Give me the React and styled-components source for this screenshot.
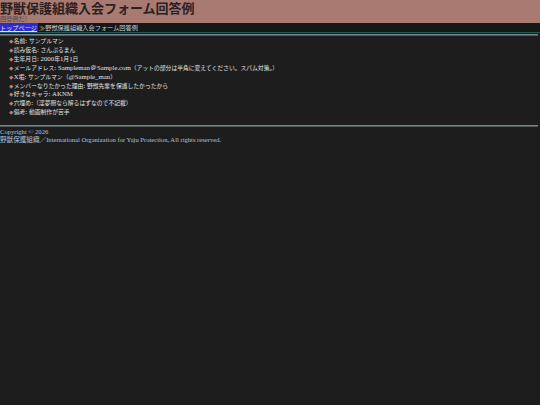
import React from "react";
import styled, { createGlobalStyle } from "styled-components";

const GlobalStyle = createGlobalStyle`
  html, body {
    margin: 0;
    padding: 0;
    background: #1d1d1d;
    font-family: "Liberation Serif", "Noto Sans CJK JP", serif;
  }
`;

const Page = styled.div`
  width: 540px;
  min-height: 405px;
  background: #1d1d1d;
  color: #d8d8d8;
`;

const Header = styled.header`
  background: #a97a72;
  height: 23px;
  display: flex;
  flex-direction: column;
`;

const Title = styled.h1`
  margin: 0;
  font-family: "Noto Sans CJK JP", sans-serif;
  font-size: 13px;
  font-weight: 700;
  line-height: 15px;
  height: 15px;
  color: #2a2222;
`;

const SubTitle = styled.div`
  font-family: "Noto Sans CJK JP", sans-serif;
  font-size: 6.2px;
  font-weight: 700;
  line-height: 7px;
  height: 7px;
  color: #6a5656;
`;

const Breadcrumb = styled.nav`
  background: #131919;
  height: 9px;
  font-family: "Noto Sans CJK JP", sans-serif;
  font-size: 6.2px;
  line-height: 9px;
  color: #c8d0d0;
  border-bottom: 1px solid #1f5a5a;
  white-space: nowrap;
`;

const TopLink = styled.a`
  background: #2b2bd0;
  color: #e4e4ff;
  text-decoration: underline;
  padding-right: 1px;
  margin-right: 1px;
`;

const Rule = styled.div`
  height: 0;
  margin: ${(p) => p.$margin || "1px 2px 0 0"};
  border-top: 1px solid #7c8686;
  border-bottom: 1px solid #4e5858;
`;

const List = styled.ul`
  list-style: none;
  margin: 1px 0 8px;
  padding: 0 0 0 9px;
`;

const Item = styled.li`
  font-family: "Noto Sans CJK JP", sans-serif;
  font-size: 5.8px;
  line-height: 7.9px;
  color: #e0e0e0;
  white-space: nowrap;

  &::before {
    content: "◆";
    color: #c27e6e;
    font-family: "DejaVu Sans", sans-serif;
    font-size: 5.5px;
    margin-right: 0.5px;
  }
`;

const Latin = styled.span`
  font-family: "Liberation Serif", serif;
  font-size: 6.8px;
`;

const Footer = styled.footer`
  font-size: 6.6px;
  line-height: 7.4px;
  color: #b4c2da;
  padding-top: 1px;
`;

const items = [
  "名前: サンプルマン",
  "読み仮名: さんぷるまん",
  "生年月日: 2000年1月1日",
  "メールアドレス: Sampleman＠Sample.com（アットの部分は半角に変えてください。スパム対策。）",
  "X垢: サンプルマン（@Sample_man）",
  "メンバーなりたかった理由: 野獣先輩を保護したかったから",
  "好きなキャラ: AKNM",
  "穴埋め:（淫夢厨なら解るはずなので不記載）",
  "備考: 動画制作が苦手",
];

// split ascii runs out so they get the serif latin size
const renderMixed = (text) =>
  text
    .split(/([\x20-\x7E＠]+)/)
    .filter(Boolean)
    .map((part, i) =>
      /^[\x20-\x7E＠]+$/.test(part) ? <Latin key={i}>{part}</Latin> : part
    );

export default function App() {
  return (
    <Page>
      <GlobalStyle />
      <Header>
        <Title>野獣保護組織入会フォーム回答例</Title>
        <SubTitle>回答例だ!</SubTitle>
      </Header>
      <Breadcrumb>
        <TopLink href="#">トップページ</TopLink>≫野獣保護組織入会フォーム回答例
      </Breadcrumb>
      <Rule />
      <List>
        {items.map((t) => (
          <Item key={t}>{renderMixed(t)}</Item>
        ))}
      </List>
      <Rule $margin="0 2px 0 0" />
      <Footer>
        <div>Copyright © 2026</div>
        <div>野獣保護組織／International Organization for Yaju Protection, All rights reserved.</div>
      </Footer>
    </Page>
  );
}
